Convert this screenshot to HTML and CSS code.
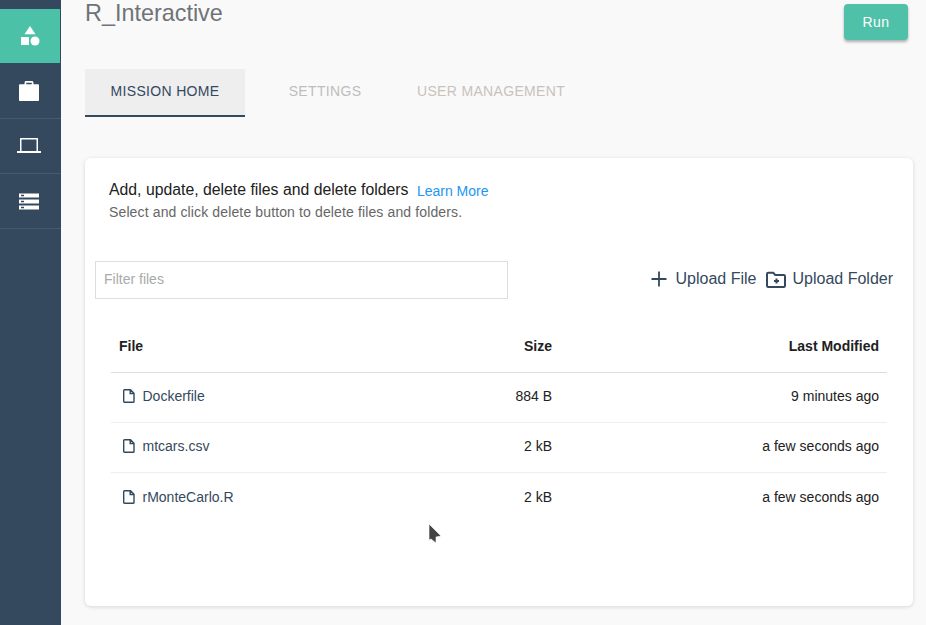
FILE: index.html
```html
<!DOCTYPE html>
<html>
<head>
    <title>R_Interactive</title>
    <link rel="stylesheet" href="styles.css">
</head>
<body>
    <div class="sidebar">
        <div class="side-item active">
            <svg width="20" height="20" viewBox="0 0 20 20"><path d="M10 0l5.500 8.200h-11z"/><rect x="1" y="11" width="8" height="8"/><circle cx="15" cy="15" r="4.500"/></svg>
        </div>
        <div class="side-item">
            <svg width="20" height="20" viewBox="1 1 18 18"><path fill-rule="evenodd" d="M6 4V2.400C6 1.600 6.600 1 7.400 1h5.200c.8 0 1.400.6 1.400 1.400V4h4c.6 0 1 .4 1 1v13c0 .6-.4 1-1 1H2c-.6 0-1-.4-1-1V5c0-.6.4-1 1-1zm1.500 0h5V2.500h-5z"/></svg>
        </div>
        <div class="side-item">
            <svg width="24" height="17" viewBox="0 1 24 17"><path fill-rule="evenodd" d="M3.500 1h17c.3 0 .5.2.5.500V14h3v2H0v-2h3V1.500c0-.3.2-.5.5-.5zm1 1.500V14h15V2.500z"/></svg>
        </div>
        <div class="side-item">
            <svg width="20" height="17" viewBox="0 0 20 17"><path fill-rule="evenodd" d="M0 .5h20v4H0zm2 1.300v1.400h3V1.800zM0 6.500h20v4H0zm2 1.300v1.400h3V7.800zM0 12.500h20v4H0zm2 1.300v1.400h3v-1.400z"/></svg>
        </div>
    </div>

    <div class="main">
        <div class="header">
            <div class="title">R_Interactive</div>
            <button class="run-btn">Run</button>
        </div>

        <div class="tabs">
            <div class="tab selected">MISSION HOME</div>
            <div class="tab">SETTINGS</div>
            <div class="tab tab-user">USER MANAGEMENT</div>
        </div>

        <div class="card">
            <div class="intro">
                <div class="intro-head">Add, update, delete files and delete folders <a class="learn">Learn More</a></div>
                <div class="intro-sub">Select and click delete button to delete files and folders.</div>
            </div>

            <div class="toolbar">
                <input class="filter" type="text" placeholder="Filter files">
                <div class="actions">
                    <span class="action">
                        <svg width="16" height="16" viewBox="0 0 16 16"><path d="M8 .5v15M.5 8h15" fill="none" stroke="#34495e" stroke-width="1.800"/></svg>
                        Upload File
                    </span>
                    <span class="action action-folder">
                        <svg width="20" height="17" viewBox="0 0 20 17"><path d="M1 3c0-.8.5-1.300 1.200-1.300h5l2 2.300h8.600c.7 0 1.200.5 1.200 1.200v9.500c0 .7-.5 1.200-1.200 1.200H2.200c-.7 0-1.200-.5-1.200-1.200zM10.500 7.500v5M8 10h5" fill="none" stroke="#34495e" stroke-width="2"/></svg>
                        Upload Folder
                    </span>
                </div>
            </div>

            <table class="files">
                <thead>
                    <tr>
                        <th class="col-file">File</th>
                        <th class="col-size">Size</th>
                        <th class="col-date">Last Modified</th>
                    </tr>
                </thead>
                <tbody>
                    <tr>
                        <td class="col-file"><svg class="file-icon" width="12" height="14" viewBox="0 0 12 14"><path d="M1.500.8h6l3.500 3.500v8.100c0 .5-.3.8-.8.8H1.500c-.5 0-.8-.3-.8-.8V1.600c0-.5.3-.8.800-.8zM7.200 1v3.500H11"/></svg>Dockerfile</td>
                        <td class="col-size">884 B</td>
                        <td class="col-date">9 minutes ago</td>
                    </tr>
                    <tr>
                        <td class="col-file"><svg class="file-icon" width="12" height="14" viewBox="0 0 12 14"><path d="M1.500.8h6l3.500 3.500v8.100c0 .5-.3.8-.8.8H1.500c-.5 0-.8-.3-.8-.8V1.600c0-.5.3-.8.800-.8zM7.200 1v3.500H11"/></svg>mtcars.csv</td>
                        <td class="col-size">2 kB</td>
                        <td class="col-date">a few seconds ago</td>
                    </tr>
                    <tr>
                        <td class="col-file"><svg class="file-icon" width="12" height="14" viewBox="0 0 12 14"><path d="M1.500.8h6l3.500 3.500v8.100c0 .5-.3.8-.8.8H1.500c-.5 0-.8-.3-.8-.8V1.600c0-.5.3-.8.800-.8zM7.200 1v3.500H11"/></svg>rMonteCarlo.R</td>
                        <td class="col-size">2 kB</td>
                        <td class="col-date">a few seconds ago</td>
                    </tr>
                </tbody>
            </table>
        </div>
    </div>

    <svg class="cursor" width="14" height="22" viewBox="0 0 14 22"><path d="M1 1l12 12-5 1v6l-5-4-2 1z" fill="#444" stroke="#fff" stroke-opacity=".6"/></svg>
</body>
</html>
```

FILE: styles.css
```css
html, body {
    height: 100%;
}

body {
    margin: 0;
    display: flex;
    height: 625px;
    overflow: hidden;
    position: relative;
    background-color: #f9f9f9;
    font-family: "Liberation Sans", Arial, sans-serif;
}

.sidebar {
    width: 61px;
    flex-shrink: 0;
    padding-top: 9px;
    box-sizing: border-box;
    background-color: #34495e;
}

.side-item {
    height: 55px;
    padding-right: 3px;
    display: flex;
    align-items: center;
    justify-content: center;
    box-sizing: border-box;
    border-bottom: 1px solid #455a70;
}

.side-item svg {
    fill: #fff;
}

.side-item.active {
    width: 60px;
    height: 54px;
    margin-bottom: 1px;
    padding-right: 1px;
    border-bottom: none;
    background-color: #4bc1a8;
}

.main {
    flex: 1;
    min-width: 0;
    padding: 0 13px 0 24px;
}

.header {
    display: flex;
    justify-content: space-between;
    height: 69px;
}

.title {
    font-size: 23.4px;
    line-height: 26px;
    color: #6f7378;
}

.run-btn {
    width: 64px;
    height: 36px;
    margin: 4px 5px 0 0;
    border: none;
    border-radius: 4px;
    font-family: inherit;
    font-size: 14px;
    letter-spacing: .5px;
    color: #fff;
    background-color: #4fc1a9;
    box-shadow: 0 2px 3px rgba(0, 0, 0, 0.3);
}

.tabs {
    display: flex;
    height: 48px;
}

.tab {
    display: flex;
    align-items: center;
    justify-content: center;
    width: 160px;
    padding-bottom: 2px;
    font-size: 14px;
    letter-spacing: .33px;
    color: #bdbdbd;
    box-sizing: border-box;
    border-bottom: 2px solid transparent;
}

.tab.selected {
    color: #34495e;
    background-color: #eeeeee;
    border-bottom-color: #34495e;
}

.tab-user {
    width: 172px;
    color: #c9c2bb;
}

.card {
    height: 448px;
    margin-top: 41px;
    box-sizing: border-box;
    background-color: #fff;
    border-radius: 6px;
    box-shadow: 0 1px 4px rgba(0, 0, 0, 0.14);
}

.intro {
    padding: 23px 24px 0;
}

.intro-head {
    font-size: 15.8px;
    line-height: 18px;
    color: #212121;
}

.learn {
    margin-left: 4px;
    font-size: 14px;
    vertical-align: -1px;
    color: #2196f3;
}

.intro-sub {
    margin-top: 4px;
    font-size: 14px;
    letter-spacing: .13px;
    line-height: 16px;
    color: #666;
}

.toolbar {
    display: flex;
    justify-content: space-between;
    align-items: center;
    margin-top: 41px;
    padding: 0 20px 0 10px;
}

.filter {
    width: 413px;
    height: 38px;
    padding: 0 8px 2px;
    box-sizing: border-box;
    border: 1px solid #ddd;
    outline: none;
    font-family: inherit;
    font-size: 14px;
}

.filter::placeholder {
    color: #aaa;
}

.actions {
    display: flex;
    gap: 9px;
    padding-bottom: 2px;
    font-size: 16px;
    color: #34495e;
}

.action {
    display: flex;
    align-items: center;
    gap: 9px;
}

.action-folder {
    gap: 7px;
}

.files {
    width: 776px;
    margin: 21px 0 0 26px;
    border-collapse: collapse;
    font-size: 14px;
}

.files th {
    height: 52px;
    padding: 0 8px;
    color: #212121;
    border-bottom: 1px solid #ddd;
}

.files td {
    height: 50px;
    padding: 0 8px 4px;
    box-sizing: border-box;
    color: #212121;
    border-bottom: 1px solid #eee;
}

.files tr:last-child td {
    padding-bottom: 2px;
    border-bottom: none;
}

.col-file {
    text-align: left;
}

.col-size {
    width: 120px;
    text-align: right;
}

.col-date {
    width: 311px;
    text-align: right;
}

.files td.col-file {
    padding-left: 12px;
    color: #34495e;
}

.file-icon {
    margin-right: 7.500px;
    vertical-align: -2px;
    fill: none;
    stroke: #34495e;
    stroke-width: 1.4;
}

.cursor {
    position: absolute;
    left: 428px;
    top: 523px;
}
```
